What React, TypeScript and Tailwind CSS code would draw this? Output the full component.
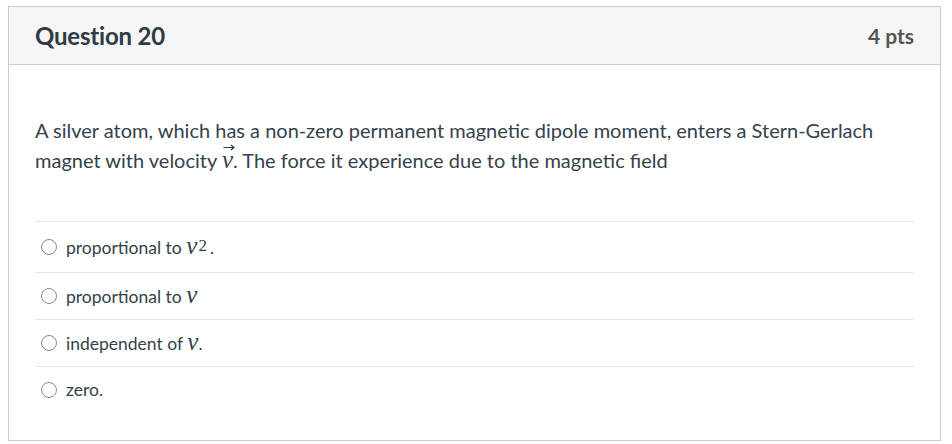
import React from 'react'

const MathV = ({ arrow, sup }: { arrow?: boolean; sup?: string }) => (
  <span className="relative inline-block font-['Liberation_Serif',serif] italic text-[25px] leading-none">
    {arrow && (
      <svg
        className="absolute left-[1px] top-[-4px]"
        width="12"
        height="8"
        viewBox="0 0 12 8"
        fill="none"
        stroke="#2d3b45"
        strokeWidth="1.2"
      >
        <path d="M0.5 4.5 H11 M8 2 L11 4.5 L8 7" />
      </svg>
    )}
    v
    {sup && (
      <sup className="not-italic text-[17px] ml-[1px] relative top-[-3px]">{sup}</sup>
    )}
  </span>
)

const answers: { id: string; label: React.ReactNode }[] = [
  {
    id: 'a',
    label: (
      <>
        proportional to <MathV sup="2" />
        <span className="ml-[3px]">.</span>
      </>
    ),
  },
  { id: 'b', label: <>proportional to <MathV /></> },
  { id: 'c', label: <>independent of <MathV />.</> },
  { id: 'd', label: <>zero.</> },
]

export default function App() {
  return (
    <div className="w-[952px] h-[444px] bg-white pt-[6px] pl-[8px] font-['Lato','Noto_Sans',sans-serif] text-[#34424c]">
      <div className="w-[933px] h-[435px] border border-[#c7cdd1] flex flex-col">
        {/* header */}
        <div className="h-[58px] bg-[#f5f5f5] border-b border-[#c7cdd1] flex items-center justify-between px-[26px]">
          <h2 className="text-[24px] font-bold tracking-[-0.2px] text-[#2d3b45]">Question 20</h2>
          <span className="text-[21px] font-bold text-[#555]">4 pts</span>
        </div>

        {/* body */}
        <div className="px-[26px] pt-[50px]">
          <p className="text-[20px] leading-[30px]">
            A silver atom, which has a non-zero permanent magnetic dipole moment, enters a Stern-Gerlach
            magnet with velocity <MathV arrow />. The force it experience due to the magnetic field
          </p>

          <div className="mt-[46px]">
            {answers.map((a, i) => (
              <label
                key={a.id}
                className={`flex items-center gap-[9px] border-t border-[#e6e6e6] pl-[6px] text-[17.5px] ${
                  i === 0 ? 'h-[51px]' : 'h-[47px]'
                }`}
              >
                <input
                  type="radio"
                  name="q20"
                  className="w-[16px] h-[16px] appearance-none rounded-full border border-[#8a8a8a] bg-white"
                />
                <span>{a.label}</span>
              </label>
            ))}
          </div>
        </div>
      </div>
    </div>
  )
}
